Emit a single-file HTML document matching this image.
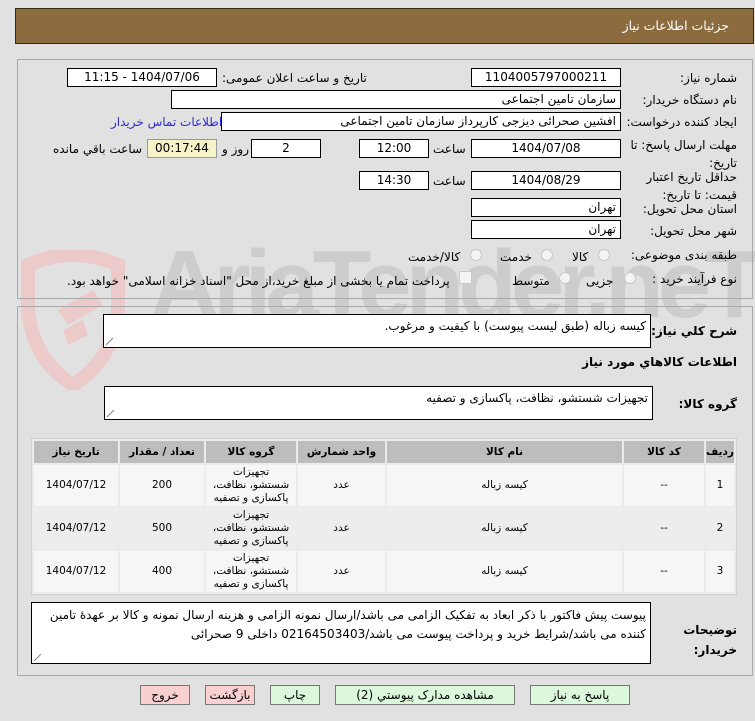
<!DOCTYPE html>
<html><head><meta charset="utf-8"><style>
*{margin:0;padding:0;box-sizing:border-box}
body{width:755px;height:721px;background:#e1e1e1;font-family:"DejaVu Sans","Liberation Sans",sans-serif;font-size:11.5px;color:#000;position:relative;overflow:hidden}
.a{position:absolute;white-space:nowrap}
.r{direction:rtl}
.in{position:absolute;background:#fff;border:1px solid #000;height:19px;line-height:17px;direction:rtl;padding:0 4px;white-space:nowrap}
.c{text-align:center}
.ta{position:absolute;background:#fff;border:1px solid #000;direction:rtl;padding:3px 4px;line-height:20px}
.ta:after{content:"";position:absolute;left:2px;bottom:2px;width:7px;height:7px;background:linear-gradient(135deg,transparent 45%,#888 46%,#888 54%,transparent 55%)}
.rad{position:absolute;width:12px;height:12px;border-radius:50%;border:1px solid #c8c8c8;background:#f4f4f4}
.btn{position:absolute;top:685px;height:20px;border:1px solid #777;line-height:18px;text-align:center;font-size:12px;direction:rtl}
.g{background:#dcf8dc}.p{background:#f8d0d0}
table{position:absolute;left:31px;top:438px;width:706px;border-collapse:separate;border-spacing:2px;background:#ececec;border:1px solid #cfcfcf}
th{background:#bdbdbd;height:22px;padding:0;font-weight:bold;font-size:10.5px}
td{background:#f6f6f6;height:41px;padding:0;text-align:center;font-size:10.5px;line-height:13px}
tr.e td{background:#ededed}
#wm{position:absolute;left:0;top:230px;width:755px;height:170px;overflow:hidden}
</style></head><body>
<div id="wm">
<div class="a" style="left:150px;top:0px;font-size:96px;font-weight:bold;color:#cdcdcd;letter-spacing:-6px;font-family:'Liberation Sans',sans-serif">AriaTender.neT</div>
<svg class="a" style="left:18px;top:20px" width="110" height="140" viewBox="0 0 110 140"><path d="M10 15 Q55 -5 100 15 L100 60 Q95 110 55 135 Q15 110 10 60Z" fill="none" stroke="#eccaca" stroke-width="14"/><path d="M40 60 L75 40 L85 55 L50 75Z M45 80 L65 70 L70 85 L50 95Z" fill="#eccaca"/></svg>
</div>

<div class="a" style="left:15px;top:8px;width:739px;height:36px;background:#8c6b3f;border:1px solid #3a2a14"></div>
<div class="a r" style="right:26px;top:18px;color:#fff;font-size:12.5px">جزئیات اطلاعات نیاز</div>

<div class="a" style="left:17px;top:59px;width:736px;height:240px;border:1px solid #a9a9a9"></div>
<div class="a r" style="right:18px;top:71px;font-size:12px">شماره نیاز:</div>
<div class="in c" style="left:471px;top:68px;width:150px;font-size:12px">1104005797000211</div>
<div class="a r" style="left:222px;top:71px;font-size:12px">تاریخ و ساعت اعلان عمومی:</div>
<div class="in c" style="left:67px;top:68px;width:150px;font-size:12px">1404/07/06 - 11:15</div>

<div class="a r" style="right:18px;top:93px;font-size:12px">نام دستگاه خریدار:</div>
<div class="in" style="left:171px;top:90px;width:450px;font-size:12px">سازمان تامین اجتماعی</div>

<div class="a r" style="right:18px;top:115px;font-size:12px">ایجاد کننده درخواست:</div>
<div class="in" style="left:221px;top:112px;width:400px;font-size:12px">افشین صحرائی دیزجی کارپرداز سازمان تامین اجتماعی</div>
<div class="a r" style="left:111px;top:115px;color:#2a2ad8;font-size:12px">اطلاعات تماس خریدار</div>

<div class="a r" style="right:18px;top:136px;font-size:12px;line-height:18px;text-align:right">مهلت ارسال پاسخ: تا<br>تاریخ:</div>
<div class="in c" style="left:471px;top:139px;width:150px;font-size:12px">1404/07/08</div>
<div class="a r" style="left:433px;top:142px;font-size:12px">ساعت</div>
<div class="in c" style="left:359px;top:139px;width:70px;font-size:12px">12:00</div>
<div class="in c" style="left:251px;top:139px;width:70px;font-size:12px">2</div>
<div class="a r" style="left:222px;top:142px;font-size:12px">روز و</div>
<div class="in c" style="left:147px;top:139px;width:70px;background:#f6f3c9;border-color:#999;font-size:12px">00:17:44</div>
<div class="a r" style="left:53px;top:142px;font-size:12px">ساعت باقي مانده</div>

<div class="a r" style="right:18px;top:168px;font-size:12px;line-height:18px;text-align:right">حداقل تاریخ اعتبار<br>قیمت: تا تاریخ:</div>
<div class="in c" style="left:471px;top:171px;width:150px;font-size:12px">1404/08/29</div>
<div class="a r" style="left:433px;top:174px;font-size:12px">ساعت</div>
<div class="in c" style="left:359px;top:171px;width:70px;font-size:12px">14:30</div>

<div class="a r" style="right:18px;top:202px;font-size:12px">استان محل تحویل:</div>
<div class="in" style="left:471px;top:198px;width:150px;font-size:12px">تهران</div>
<div class="a r" style="right:18px;top:224px;font-size:12px">شهر محل تحویل:</div>
<div class="in" style="left:471px;top:220px;width:150px;font-size:12px">تهران</div>

<div class="a r" style="right:18px;top:248px;font-size:12px">طبقه بندی موضوعی:</div>
<div class="rad" style="left:598px;top:249px"></div><div class="a r" style="left:572px;top:250px;font-size:12px">کالا</div>
<div class="rad" style="left:541px;top:249px"></div><div class="a r" style="left:500px;top:250px;font-size:12px">خدمت</div>
<div class="rad" style="left:470px;top:249px"></div><div class="a r" style="left:408px;top:250px;font-size:12px">کالا/خدمت</div>

<div class="a r" style="right:18px;top:272px;font-size:12px">نوع فرآیند خرید :</div>
<div class="rad" style="left:624px;top:272px"></div><div class="a r" style="left:586px;top:274px;font-size:12px">جزیی</div>
<div class="rad" style="left:559px;top:272px"></div><div class="a r" style="left:512px;top:274px;font-size:12px">متوسط</div>
<div class="a" style="left:459px;top:271px;width:13px;height:13px;border:1px solid #c8c8c8;background:#f4f4f4"></div>
<div class="a r" style="left:67px;top:274px;font-size:12px">پرداخت تمام یا بخشی از مبلغ خرید،از محل "اسناد خزانه اسلامی" خواهد بود.</div>

<div class="a" style="left:17px;top:306px;width:736px;height:370px;border:1px solid #a9a9a9"></div>
<div class="a r" style="right:18px;top:324px;font-weight:bold;font-size:12px">شرح كلي نياز:</div>
<div class="ta" style="left:103px;top:314px;width:548px;height:34px;font-size:12px;line-height:16px">کیسه زباله (طبق لیست پیوست) با کیفیت و مرغوب.</div>
<div class="a r" style="right:18px;top:355px;font-weight:bold;font-size:12px">اطلاعات كالاهاي مورد نياز</div>
<div class="a r" style="right:18px;top:397px;font-weight:bold;font-size:12px">گروه کالا:</div>
<div class="ta" style="left:104px;top:386px;width:549px;height:34px;font-size:12px;line-height:16px">تجهیزات شستشو، نظافت، پاکسازی و تصفیه</div>

<table dir="rtl">
<tr><th style="width:28px">ردیف</th><th style="width:80px">کد کالا</th><th style="width:235px">نام کالا</th><th style="width:87px">واحد شمارش</th><th style="width:90px">گروه کالا</th><th style="width:84px">تعداد / مقدار</th><th>تاریخ نیاز</th></tr>
<tr><td>1</td><td>--</td><td>کیسه زباله</td><td>عدد</td><td>تجهیزات<br>شستشو، نظافت،<br>پاکسازی و تصفیه</td><td>200</td><td>1404/07/12</td></tr>
<tr class="e"><td>2</td><td>--</td><td>کیسه زباله</td><td>عدد</td><td>تجهیزات<br>شستشو، نظافت،<br>پاکسازی و تصفیه</td><td>500</td><td>1404/07/12</td></tr>
<tr><td>3</td><td>--</td><td>کیسه زباله</td><td>عدد</td><td>تجهیزات<br>شستشو، نظافت،<br>پاکسازی و تصفیه</td><td>400</td><td>1404/07/12</td></tr>
</table>

<div class="a r" style="right:18px;top:620px;font-weight:bold;font-size:12px;line-height:20px;text-align:right">توضیحات<br>خریدار:</div>
<div class="ta" style="left:31px;top:602px;width:620px;height:62px;font-size:12px;line-height:19px;white-space:normal">پیوست پیش فاکتور با ذکر ابعاد به تفکیک الزامی می باشد/ارسال نمونه الزامی و هزینه ارسال نمونه و کالا بر عهدهٔ تامین کننده می باشد/شرایط خرید و پرداخت پیوست می باشد/02164503403 داخلی 9 صحرائی</div>

<div class="btn g" style="left:530px;width:100px">پاسخ به نیاز</div>
<div class="btn g" style="left:335px;width:180px">مشاهده مدارک پیوستي (2)</div>
<div class="btn g" style="left:270px;width:50px">چاپ</div>
<div class="btn p" style="left:205px;width:50px">بازگشت</div>
<div class="btn p" style="left:140px;width:50px">خروج</div>
</body></html>
